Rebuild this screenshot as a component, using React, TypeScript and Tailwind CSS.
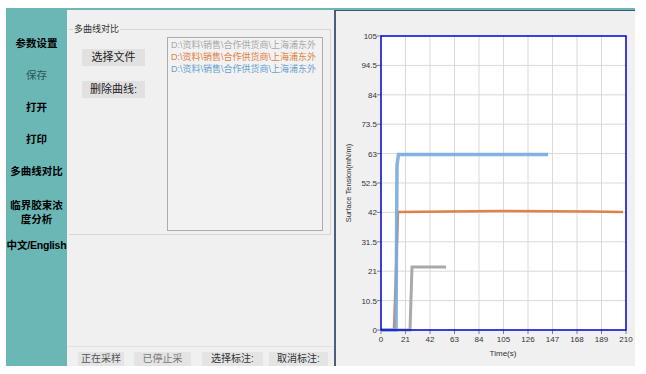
const sans = "font-['Liberation_Sans','Noto_Sans_CJK_SC',sans-serif]";

const menu = [
  { label: ["参数设置"], h: "h-[32px]", tone: "font-bold text-black" },
  { label: ["保存"], h: "h-[32px]", tone: "font-normal text-[#2a5756]" },
  { label: ["打开"], h: "h-[32px]", tone: "font-bold text-black" },
  { label: ["打印"], h: "h-[32px]", tone: "font-bold text-black" },
  { label: ["多曲线对比"], h: "h-[32px]", tone: "font-bold text-black" },
  { label: ["临界胶束浓", "度分析"], h: "h-[50px]", tone: "font-bold text-black" },
  { label: ["中文/English"], h: "h-[16px]", tone: "font-bold text-black tracking-[-0.2px]" },
];

const files = [
  { text: "D:\\资料\\销售\\合作供货商\\上海浦东外", color: "text-[#a8a8a8]" },
  { text: "D:\\资料\\销售\\合作供货商\\上海浦东外", color: "text-[#e0803f]" },
  { text: "D:\\资料\\销售\\合作供货商\\上海浦东外", color: "text-[#6a9fd0]" },
];

// plot area in page pixels
const X0 = 381;
const X1 = 626;
const Y0 = 330;
const Y1 = 36;
const sx = (v: number) => X0 + (v / 210) * (X1 - X0);
const sy = (v: number) => Y0 - (v / 105) * (Y0 - Y1);

function Chart() {
  const ticks = Array.from({ length: 11 }, (_, i) => i);
  const f = "Liberation Sans, sans-serif";
  return (
    <svg width="299" height="355" viewBox="336 11 299 355" className="block">
      <rect x={X0} y={Y1} width={X1 - X0} height={Y0 - Y1} fill="#ffffff" />
      {ticks.slice(1, 10).map((i) => (
        <g key={i}>
          <line x1={sx(i * 21)} x2={sx(i * 21)} y1={Y1} y2={Y0} stroke="#dadada" strokeWidth="1" />
          <line x1={X0} x2={X1} y1={sy(i * 10.5)} y2={sy(i * 10.5)} stroke="#dadada" strokeWidth="1" />
        </g>
      ))}
      {ticks.map((i) => (
        <g key={"t" + i}>
          <line x1={X0 - 4} x2={X0} y1={sy(i * 10.5)} y2={sy(i * 10.5)} stroke="#808080" strokeWidth="1" />
          <text x={X0 - 4} y={sy(i * 10.5) + 3} textAnchor="end" fontSize="8" fontFamily={f} fill="#333">
            {String(Math.round(i * 10.5 * 10) / 10)}
          </text>
          <line x1={sx(i * 21)} x2={sx(i * 21)} y1={Y0} y2={Y0 + 4} stroke="#808080" strokeWidth="1" />
          <text x={sx(i * 21)} y={Y0 + 12} textAnchor="middle" fontSize="8" fontFamily={f} fill="#333">
            {String(i * 21)}
          </text>
        </g>
      ))}
      <polyline points={`394,330 398,212 ${sx(100)},211 ${sx(180)},211.5 623,212`} fill="none" stroke="#d9773a" strokeWidth="2.5" strokeOpacity="0.9" />
      <polyline points={`381,330 410,330 412,267 446,267`} fill="none" stroke="#a9a9a9" strokeWidth="3" />
      <polyline points={`381,330 396,330 397,165 398.5,154.5 548,154.5`} fill="none" stroke="#78abde" strokeWidth="3.5" strokeOpacity="0.9" />
      <rect x={X0} y={Y1} width={X1 - X0} height={Y0 - Y1} fill="none" stroke="#0000d4" strokeWidth="1.5" />
      <text x="351" y="183" transform="rotate(-90 351 183)" textAnchor="middle" fontSize="7.5" fontFamily={f} fill="#333">
        Surface Tension(mN/m)
      </text>
      <text x="503" y="356" textAnchor="middle" fontSize="8" fontFamily={f} fill="#333">
        Time(s)
      </text>
    </svg>
  );
}

export default function App() {
  return (
    <div className={`h-[374px] w-[646px] bg-white pl-[6px] pt-[8px] ${sans}`}>
      <div className="flex h-[358px] w-[629px] bg-[#6bb7b6]">
        <aside className="flex w-[61px] flex-col pt-[19px]">
          {menu.map((m) => (
            <div key={m.label[0]} className={`flex ${m.h} flex-col items-center justify-center whitespace-nowrap text-[10.5px] leading-[14px] ${m.tone}`}>
              {m.label.map((l) => (
                <span key={l}>{l}</span>
              ))}
            </div>
          ))}
        </aside>
        <main className="mt-[2px] flex flex-1 bg-[#f0f0f0]">
          <section className="flex w-[267px] flex-col">
            <div className="relative ml-[2px] mt-[19px] h-[206px] w-[262px] border-b border-r border-t border-[#d6d6d6]">
              <span className="absolute -top-[7px] left-[4px] bg-[#f0f0f0] px-[1px] text-[9px] leading-[12px] text-[#333]">
                多曲线对比
              </span>
              <div className="flex pl-[13px] pt-[7px]">
                <div className="mt-[12px] flex flex-col gap-[15px]">
                  <button className="h-[17px] w-[63px] bg-[#e1e1e1] text-[11px] leading-[17px] text-[#222]">选择文件</button>
                  <button className="h-[17px] w-[63px] bg-[#e1e1e1] text-[11px] leading-[17px] text-[#222]">删除曲线:</button>
                </div>
                <div className="ml-[22px] h-[194px] w-[156px] border border-[#adadad] bg-[#f2f2f2] pl-[3px] pt-[1px]">
                  {files.map((f, i) => (
                    <div key={i} className={`whitespace-nowrap text-[9px] leading-[12px] ${f.color}`}>
                      {f.text}
                    </div>
                  ))}
                </div>
              </div>
            </div>
            <div className="flex-1" />
            <div className="flex h-[20px] items-end border-t border-[#e2e2e2] pl-[11px] text-[10px] leading-[14px] text-[#333]">
              <span className="w-[46px] bg-[#e4e4e4] text-center text-[#555]">正在采样</span>
              <span className="ml-[10px] w-[57px] bg-[#e4e4e4] text-center text-[#777]">已停止采</span>
              <span className="ml-[11px] w-[61px] bg-[#e4e4e4] text-center">选择标注:</span>
              <span className="ml-[6px] w-[59px] bg-[#e4e4e4] text-center">取消标注:</span>
            </div>
          </section>
          <section className="w-[301px] border-l-2 border-t border-[#4d5e7a] border-t-[#3e5b63] bg-[#f0f0f0]">
            <Chart />
          </section>
        </main>
      </div>
    </div>
  );
}
